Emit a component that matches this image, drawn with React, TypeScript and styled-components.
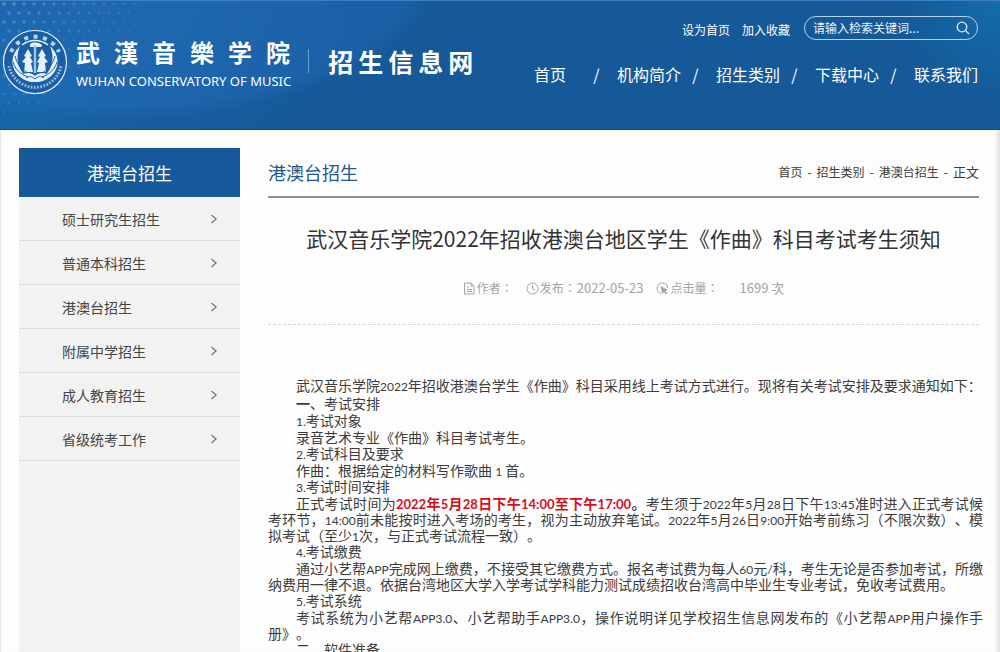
import React from "react";
import styled, { createGlobalStyle } from "styled-components";

const Global = createGlobalStyle`
  * { box-sizing: border-box; }
  body {
    margin: 0;
    background: #fdfdfd;
    color: #3c3c3c;
    font-family: "Noto Sans CJK SC", sans-serif;
    font-size: 14px;
    text-spacing-trim: space-all;
  }
  a { color: inherit; text-decoration: none; }
  h1, h2, h3, p, ul, ol { margin: 0; padding: 0; font-weight: 400; }
  ul, ol { list-style: none; }
`;

const Page = styled.div`
  height: 100vh;
  overflow: hidden;
  display: flex;
  flex-direction: column;
  box-shadow: inset -6px 0 5px -4px #d8d8d8, inset 2px 0 1px -1px #e6e6e6;
`;

const Header = styled.header`
  flex: none;
  height: 130px;
  display: flex;
  justify-content: space-between;
  padding: 0 22px 0 2px;
  color: #fff;
  border-top: 1px solid #3d80bd;
  border-bottom: 1px solid #124b85;
  background:
    radial-gradient(circle at 8% -40%, rgba(40, 120, 196, 0.4), transparent 30%),
    radial-gradient(circle at 0 100%, rgba(20, 120, 190, 0.35), transparent 12%),
    radial-gradient(circle at 100% 0, rgba(20, 130, 190, 0.45), transparent 10%),
    radial-gradient(ellipse 320px 150px at 120px -30px, #1b61a7 90%, transparent 100%),
    #155998;
`;

const Dots = styled.svg`
  position: absolute;
  left: 0;
  top: 1px;
  pointer-events: none;
`;

const Brand = styled.a`
  position: relative;
  display: flex;
  align-items: flex-start;
  padding-top: 27px;
`;

const Emblem = styled.svg`
  flex: none;
  width: 66px;
  height: 66px;
`;

const Names = styled.span`
  display: flex;
  flex-direction: column;
  margin: 4px 17px 0 8px;
`;

const Script = styled.span<{ $size: number; $gap: number }>`
  display: flex;
  gap: ${(p) => p.$gap}px;
  font-size: ${(p) => p.$size}px;
  line-height: 40px;
  font-weight: 700;
`;

const English = styled.span`
  font-family: "Noto Sans", sans-serif;
  font-size: 13px;
  line-height: 18px;
  white-space: nowrap;
`;

const Rule = styled.span`
  width: 1px;
  height: 24px;
  margin: 21px 19px 0 0;
  background: #6f9fcb;
`;

const SiteName = styled.span`
  margin-top: 13px;
`;

const HeaderRight = styled.div`
  display: flex;
  flex-direction: column;
  align-items: flex-end;
  padding-top: 13px;
`;

const Tools = styled.div`
  display: flex;
  align-items: center;
  height: 28px;
  font-size: 12px;
  line-height: 24px;
  gap: 14px;
`;

const ToolLinks = styled.div`
  display: flex;
  gap: 12px;
  padding-top: 4px;
`;

const Search = styled.form`
  display: flex;
  align-items: center;
  width: 174px;
  height: 24px;
  padding: 0 7px 0 8px;
  border: 1px solid #b5d3ee;
  border-radius: 12px;
`;

const SearchInput = styled.input`
  flex: 1;
  min-width: 0;
  padding: 0;
  border: 0;
  outline: 0;
  background: none;
  color: #fff;
  font: inherit;
  line-height: 20px;
  &::placeholder { color: #eaf4fd; opacity: 1; }
`;

const SearchButton = styled.button`
  display: flex;
  padding: 0;
  border: 0;
  background: none;
  color: #d9ebfa;
  cursor: pointer;
`;

const Nav = styled.nav`
  display: flex;
  margin-top: 20px;
  font-size: 16px;
  line-height: 24px;
`;

const NavLink = styled.a`
  width: 64px;
  text-align: center;
`;

const Slash = styled.span`
  width: 35px;
  padding-right: 6px;
  text-align: center;
`;

const Body = styled.div`
  flex: 1;
  min-height: 0;
  display: flex;
  gap: 28px;
  padding: 18px 21px 0 19px;
`;

const Sidebar = styled.aside`
  flex: none;
  width: 221px;
  background: #f2f2f2;
`;

const SidebarTitle = styled.h2`
  background: #165a9c;
  color: #fff;
  font-size: 17px;
  line-height: 49px;
  text-align: center;
`;

const SideLink = styled.a`
  display: flex;
  justify-content: space-between;
  align-items: center;
  height: 44px;
  padding: 0 22px 0 43px;
  border-bottom: 1px solid #dcdcdc;
  color: #444;
`;

const Main = styled.main`
  flex: 1;
  min-width: 0;
`;

const MainHead = styled.div`
  display: flex;
  justify-content: space-between;
  height: 50px;
  border-bottom: 2px solid #909090;
  line-height: 48px;
`;

const Section = styled.h2`
  color: #24588a;
  font-size: 18px;
`;

const Crumbs = styled.nav`
  display: flex;
  gap: 5px;
  font-size: 12px;
`;

const Current = styled.span`
  font-size: 13px;
`;

const Title = styled.h1`
  margin-top: 24px;
  color: #333;
  font-size: 21px;
  line-height: 32px;
  text-align: center;
`;

const Meta = styled.div`
  display: flex;
  justify-content: center;
  gap: 13px;
  padding: 22px 0 24px;
  border-bottom: 1px dashed #d4d4d4;
  color: #a3a3a3;
  font-family: "Noto Sans CJK TC", sans-serif;
  font-size: 12px;
  line-height: 24px;
`;

const MetaItem = styled.span`
  display: flex;
  align-items: center;
  gap: 1px;
`;

const MetaValue = styled.span`
  font-size: 13px;
`;

const Hits = styled(MetaValue)`
  margin-left: 20px;
`;

const Article = styled.article`
  margin-right: -4px;
  padding-top: 50px;
  text-align: justify;
`;

const Lead = styled.p`
  text-indent: 28px;
  line-height: 20px;
  white-space: nowrap;
`;

const Para = styled.p`
  text-indent: 28px;
  line-height: 16px;
`;

const Sub = styled.h3`
  font-size: 14px;
  text-indent: 28px;
  line-height: 17px;
`;

const Latin = styled.span`
  font-family: Lato, sans-serif;
  font-size: 12px;
  line-height: 1;
`;

const Alert = styled.strong`
  color: #d5101c;
  ${Latin} { font-size: 13px; }
`;

/** Sets digits and Latin letters in the Latin face, leaving Chinese text as is. */
function Mixed({ text }: { text: string }) {
  return (
    <>
      {text.split(/([A-Za-z0-9.:/]+)/).map((part, i) =>
        i % 2 ? <Latin key={i}>{part}</Latin> : part
      )}
    </>
  );
}

const dots: { x: number; y: number; r: number; o: number }[] = [];
for (let row = 0; row < 13; row++) {
  for (let col = 0; col < 16; col++) {
    const x = 4 + col * 10 + (row % 2) * 5;
    const y = 3 + row * 9;
    const fade = 1 - x / 165 - y / 150;
    if (fade > 0) dots.push({ x, y, r: 1 + fade, o: 0.12 + fade * 0.3 });
  }
}

const Backdrop = () => (
  <Dots width="180" height="128" aria-hidden="true">
    {dots.map((d) => (
      <circle key={`${d.x}-${d.y}`} cx={d.x} cy={d.y} r={d.r} fill="#7fc0ee" opacity={d.o} />
    ))}
  </Dots>
);

const Logo = () => (
  <Emblem viewBox="0 0 66 66" fill="none" stroke="#e4f1fb" aria-hidden="true">
    <circle cx="33" cy="34" r="31.5" strokeWidth="1.2" fill="#1a5fa6" />
    <path d="M9 24A26.500 26.500 0 0 1 57 24" strokeWidth="4" strokeDasharray="4 5.500" opacity=".8" />
    <path d="M7 38A26.500 26.500 0 0 0 59 38" strokeWidth="3" strokeDasharray="1.800 1.400" opacity=".6" />
    <path d="M20 17a21.500 21.500 0 0 1 26 0" strokeWidth="1.500" />
    <g fill="#e4f1fb" stroke="none">
      <path d="M18 18C7 28 8 43 21 51c4 2.500 8 3 12 3-6-3-10-5-13-10-5-7-6-17-2-26Z" />
      <path d="M48 18c11 10 10 25-3 33-4 2.500-8 3-12 3 6-3 10-5 13-10 5-7 6-17 2-26Z" />
      <path d="M26 21l4 7-2 1 3 5-2 1 2 9h-9l1-9-3-1 4-5-2-1Z" />
      <path d="M40 21l-4 7 2 1-3 5 2 1-2 9h9l-1-9 3-1-4-5 2-1Z" />
      <path d="M21 46c5-2 9-1 12 2 3-3 7-4 12-2-2 5-6 8-12 8s-10-3-12-8Z" />
      <path d="M28 16c3-2 8-2 12 1l-1 2H28Z" />
    </g>
    <path d="M33 17v28" stroke="#9cc8ec" strokeWidth="2.500" />
    <path d="M11 34c2 7 7 12 15 15M55 34c-2 7-7 12-15 15M13 28c2 8 6 13 13 17M53 28c-2 8-6 13-13 17" stroke="#1a5fa6" />
    <path d="M24 50c3-2 6-2 9 1 3-3 6-3 9-1" stroke="#1a5fa6" />
  </Emblem>
);

const Chevron = () => (
  <svg width="8" height="10" viewBox="0 0 8 10" fill="none" stroke="#777" strokeWidth="1.3" aria-hidden="true">
    <path d="M1.5 1l4.5 4-4.5 4" />
  </svg>
);

const SearchIcon = () => (
  <svg width="14" height="14" viewBox="0 0 14 14" fill="none" stroke="currentColor" strokeWidth="1.3" aria-hidden="true">
    <circle cx="6" cy="6" r="4.8" />
    <path d="M9.5 9.5l3.5 3.5" />
  </svg>
);

const iconProps = {
  width: 13,
  height: 13,
  viewBox: "0 0 13 13",
  fill: "none",
  stroke: "currentColor",
  "aria-hidden": true,
} as const;

const DocIcon = () => (
  <svg {...iconProps}>
    <path d="M1.5 1h6.5l3 3v8h-9.500ZM8 1v3h3M4 5h2M4 7.500h5M4 9.500h5" />
  </svg>
);

const ClockIcon = () => (
  <svg {...iconProps}>
    <circle cx="6.500" cy="6.500" r="5.500" />
    <path d="M6.500 3v4l2.500 1" />
  </svg>
);

const ClickIcon = () => (
  <svg {...iconProps}>
    <path d="M5 11.500A5.300 5.300 0 1 1 11.700 6" />
    <path d="M4.500 4l7.500 4-2.700 1 2.200 2.500-1.400 1-2.100-2.500-1.700 2Z" fill="currentColor" stroke="none" />
  </svg>
);

const chars = (text: string) => [...text].map((c, i) => <span key={i}>{c}</span>);

const navItems = ["首页", "机构简介", "招生类别", "下载中心", "联系我们"];
const sideItems = ["硕士研究生招生", "普通本科招生", "港澳台招生", "附属中学招生", "成人教育招生", "省级统考工作"];
const crumbs = ["首页", "招生类别", "港澳台招生"];

export default function App() {
  return (
    <Page>
      <Global />
      <Header>
        <Backdrop />
        <Brand href="#">
          <Logo />
          <Names>
            <Script $size={24} $gap={14}>{chars("武漢音樂学院")}</Script>
            <English>WUHAN CONSERVATORY OF MUSIC</English>
          </Names>
          <Rule />
          <SiteName>
            <Script $size={25} $gap={5}>{chars("招生信息网")}</Script>
          </SiteName>
        </Brand>
        <HeaderRight>
          <Tools>
            <ToolLinks>
              <a href="#">设为首页</a>
              <a href="#">加入收藏</a>
            </ToolLinks>
            <Search>
              <SearchInput aria-label="检索关键词" placeholder="请输入检索关键词..." />
              <SearchButton type="button" aria-label="检索">
                <SearchIcon />
              </SearchButton>
            </Search>
          </Tools>
          <Nav>
            {navItems.map((item, i) => (
              <React.Fragment key={item}>
                {i > 0 && <Slash>/</Slash>}
                <NavLink href="#">{item}</NavLink>
              </React.Fragment>
            ))}
          </Nav>
        </HeaderRight>
      </Header>
      <Body>
        <Sidebar>
          <SidebarTitle>港澳台招生</SidebarTitle>
          <ul>
            {sideItems.map((item) => (
              <li key={item}>
                <SideLink href="#">
                  {item}
                  <Chevron />
                </SideLink>
              </li>
            ))}
          </ul>
        </Sidebar>
        <Main>
          <MainHead>
            <Section>港澳台招生</Section>
            <Crumbs>
              {crumbs.map((item) => (
                <React.Fragment key={item}>
                  <a href="#">{item}</a>
                  <span>-</span>
                </React.Fragment>
              ))}
              <Current>正文</Current>
            </Crumbs>
          </MainHead>
          <Title>武汉音乐学院2022年招收港澳台地区学生《作曲》科目考试考生须知</Title>
          <Meta>
            <MetaItem><DocIcon />作者：</MetaItem>
            <MetaItem><ClockIcon />发布：<MetaValue>2022-05-23</MetaValue></MetaItem>
            <MetaItem><ClickIcon />点击量：<Hits>1699 次</Hits></MetaItem>
          </Meta>
          <Article>
            <Lead><Mixed text="武汉音乐学院2022年招收港澳台学生《作曲》科目采用线上考试方式进行。现将有关考试安排及要求通知如下：" /></Lead>
            <Sub><strong>一</strong>、考试安排</Sub>
            <Sub><Mixed text="1.考试对象" /></Sub>
            <Para>录音艺术专业《作曲》科目考试考生。</Para>
            <Sub><Mixed text="2.考试科目及要求" /></Sub>
            <Para><Mixed text="作曲：根据给定的材料写作歌曲 1 首。" /></Para>
            <Sub><Mixed text="3.考试时间安排" /></Sub>
            <Para>
              正式考试时间为<Alert><Mixed text="2022年5月28日下午14:00至下午17:00" /></Alert><strong>。</strong>
              <Mixed text="考生须于2022年5月28日下午13:45准时进入正式考试候考环节，14:00前未能按时进入考场的考生，视为主动放弃笔试。2022年5月26日9:00开始考前练习（不限次数）、模拟考试（至少1次，与正式考试流程一致）。" />
            </Para>
            <Sub><Mixed text="4.考试缴费" /></Sub>
            <Para><Mixed text="通过小艺帮APP完成网上缴费，不接受其它缴费方式。报名考试费为每人60元/科，考生无论是否参加考试，所缴纳费用一律不退。依据台湾地区大学入学考试学科能力测试成绩招收台湾高中毕业生专业考试，免收考试费用。" /></Para>
            <Sub><Mixed text="5.考试系统" /></Sub>
            <Para><Mixed text="考试系统为小艺帮APP3.0、小艺帮助手APP3.0，操作说明详见学校招生信息网发布的《小艺帮APP用户操作手册》。" /></Para>
            <Sub>二、软件准备</Sub>
          </Article>
        </Main>
      </Body>
    </Page>
  );
}
